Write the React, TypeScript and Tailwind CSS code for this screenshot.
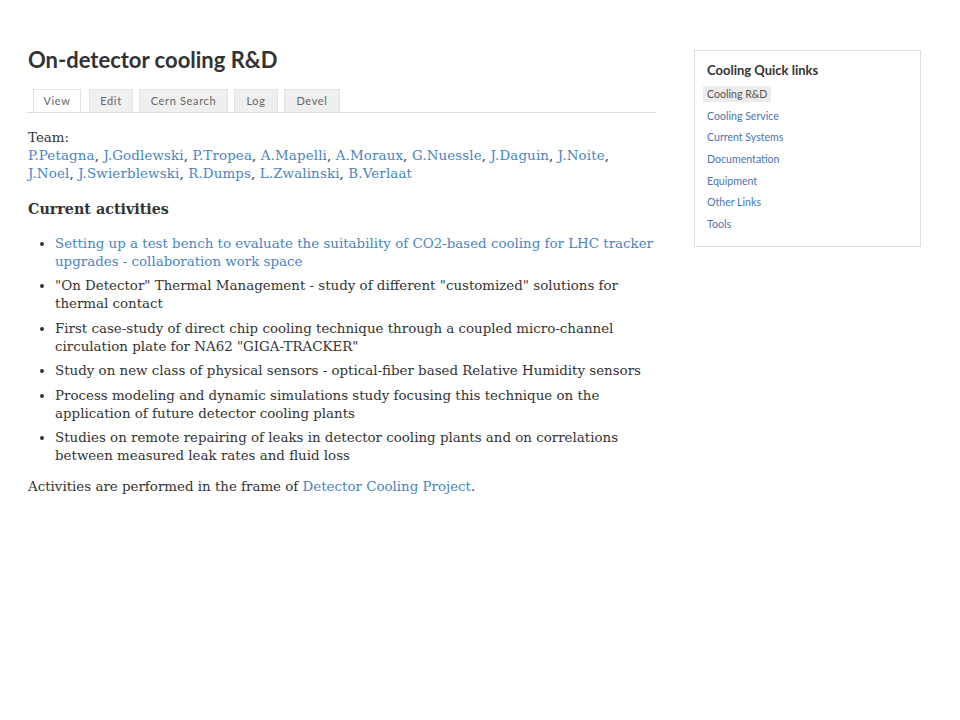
import type { ReactNode } from "react";

const tabs = [
  { label: "View", width: "w-[48px] mr-[2px]", active: true },
  { label: "Edit", width: "w-[44px]" },
  { label: "Cern Search", width: "w-[89px]" },
  { label: "Log", width: "w-[44px]" },
  { label: "Devel", width: "w-[56px]" },
];

const team = [
  "P.Petagna",
  "J.Godlewski",
  "P.Tropea",
  "A.Mapelli",
  "A.Moraux",
  "G.Nuessle",
  "J.Daguin",
  "J.Noite",
  "J.Noel",
  "J.Swierblewski",
  "R.Dumps",
  "L.Zwalinski",
  "B.Verlaat",
];

const quickLinks = [
  "Cooling R&D",
  "Cooling Service",
  "Current Systems",
  "Documentation",
  "Equipment",
  "Other Links",
  "Tools",
];

function A({ children }: { children: ReactNode }) {
  return (
    <a href="#" className="text-[#4a84c2] no-underline">
      {children}
    </a>
  );
}

export default function App() {
  return (
    <div className="min-h-screen bg-white text-[#333]">
      <div className="flex gap-[38px] pl-[27px] pt-[44px]">
        {/* Main content */}
        <main className="w-[629px]">
          <h1 className="pl-[1px] font-['Lato',sans-serif] text-[22px] font-bold leading-[32px] text-[#333]">
            On-detector cooling R&amp;D
          </h1>

          <div className="mt-[13px] flex gap-[6px] border-b border-[#dcdcdc] pl-[6px]">
            {tabs.map((t) => (
              <div
                key={t.label}
                className={
                  "flex h-[23px] items-center justify-center border border-b-0 border-[#e2e2e2] font-['Lato',sans-serif] text-[11px] tracking-[0.06em] text-[#666] " +
                  t.width +
                  (t.active ? " bg-white" : " bg-[#efefef]")
                }
              >
                {t.label}
              </div>
            ))}
          </div>

          <div className="pl-[1px] font-['DejaVu_Serif',serif] text-[13.4px] leading-[18px]">
            <p className="mt-[16px]">Team:</p>
            <p className="w-[600px] tracking-[0.01em]">
              {team.map((name, i) => (
                <span key={name}>
                  <A>{name}</A>
                  {i < team.length - 1 ? ", " : ""}
                </span>
              ))}
            </p>

            <h2 className="mt-[17px] text-[14.3px] font-bold">Current activities</h2>

            <ul className="mt-[17px] flex flex-col gap-[6.4px] pl-[27px]">
              <li className="list-disc">
                <A>
                  Setting up a test bench to evaluate the suitability of CO2-based cooling for LHC
                  tracker upgrades - collaboration work space
                </A>
              </li>
              <li className="list-disc">
                "On Detector" Thermal Management - study of different "customized" solutions for
                thermal contact
              </li>
              <li className="list-disc">
                First case-study of direct chip cooling technique through a coupled micro-channel
                circulation plate for NA62 "GIGA-TRACKER"
              </li>
              <li className="list-disc">
                Study on new class of physical sensors - optical-fiber based Relative Humidity
                sensors
              </li>
              <li className="list-disc">
                Process modeling and dynamic simulations study focusing this technique on the
                application of future detector cooling plants
              </li>
              <li className="list-disc">
                Studies on remote repairing of leaks in detector cooling plants and on correlations
                between measured leak rates and fluid loss
              </li>
            </ul>

            <p className="mt-[13px]">
              Activities are performed in the frame of <A>Detector Cooling Project</A>.
            </p>
          </div>
        </main>

        {/* Sidebar */}
        <aside className="mt-[6px] h-[197px] w-[227px] border border-[#dedede] px-[8px] pt-[10px] font-['Lato',sans-serif]">
          <h3 className="pl-[4px] text-[13px] font-bold leading-[18px] text-[#333]">
            Cooling Quick links
          </h3>
          <ul className="mt-[1px] flex flex-col">
            {quickLinks.map((l, i) => (
              <li key={l} className="h-[21.7px]">
                <a
                  href="#"
                  className={
                    "inline-block px-[4px] text-[10.6px] leading-[16px] " +
                    (i === 0 ? "bg-[#ececec] text-[#555]" : "text-[#4a74b4]")
                  }
                >
                  {l}
                </a>
              </li>
            ))}
          </ul>
        </aside>
      </div>
    </div>
  );
}
